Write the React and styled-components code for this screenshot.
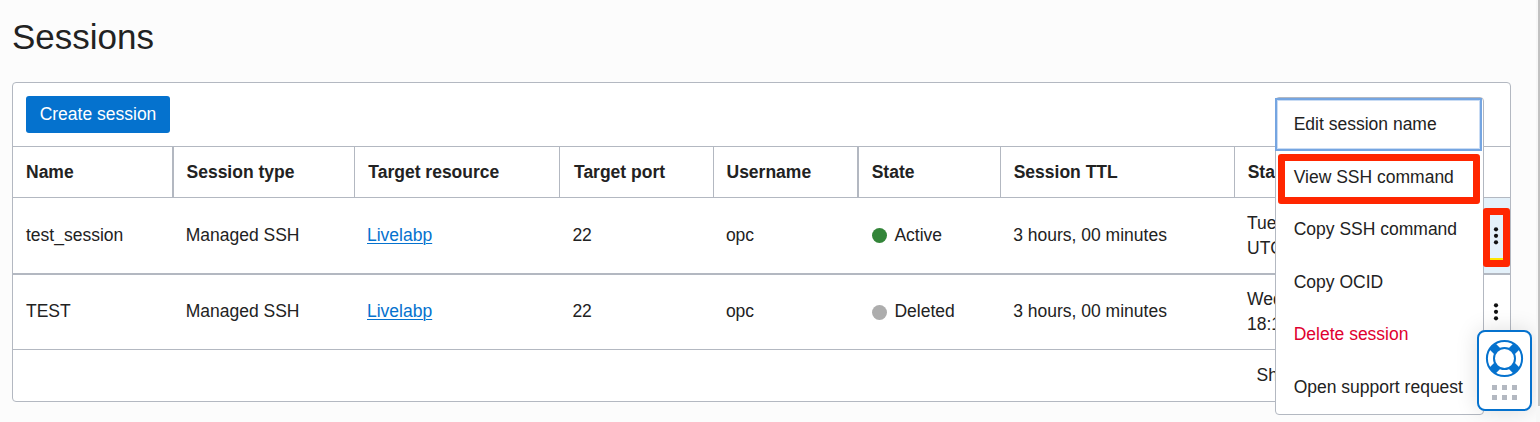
import React from "react";
import styled, { createGlobalStyle } from "styled-components";

const line = "#b3b8c1";
const blue = "#0572ce";
const red = "#ff2600";

const GlobalStyle = createGlobalStyle`
  * { box-sizing: border-box; }
  body {
    margin: 0;
    overflow: hidden;
    background: #fcfcfc;
    color: #222;
    font: 17.5px/25px "Liberation Sans", Arial, sans-serif;
  }
`;

const Page = styled.main`
  position: relative;
  height: 422px;
  padding: 16px 29px 0 12px;
`;

const Title = styled.h1`
  margin: 0 0 24px;
  font-size: 35px;
  font-weight: 400;
  line-height: 42px;
`;

const Panel = styled.section`
  height: 320px;
  border: 1px solid ${line};
  border-radius: 4px;
  background: #fff;
`;

const Toolbar = styled.div`
  height: 64px;
  padding: 13px;
  border-bottom: 1px solid ${line};
`;

const PrimaryButton = styled.button`
  display: block;
  width: 144px;
  height: 37px;
  padding: 0 0 1px;
  border: 0;
  border-radius: 3px;
  background: ${blue};
  color: #fff;
  font: inherit;
  white-space: nowrap;
`;

const Row = styled.div`
  display: grid;
  grid-template-columns: 161px 181px 205px 154px 145px 142px 234px 249px 26px;
  height: ${(p) => p.$height}px;
  border-bottom: ${(p) => p.$rule}px solid ${line};
`;

const HeadCell = styled.div`
  display: flex;
  align-items: center;
  padding-left: ${(p) => p.$inset}px;
  border-right: ${(p) => p.$rule}px solid ${line};
  font-weight: 700;
  white-space: nowrap;
`;

const Cell = styled.div`
  display: flex;
  align-items: center;
  padding-left: ${(p) => p.$inset}px;
  padding-bottom: 1px;
  white-space: nowrap;
`;

const DateCell = styled(Cell)`
  padding-bottom: 0;
`;

const Link = styled.a`
  color: ${blue};
  text-decoration: underline;
  text-decoration-thickness: 1px;
  text-underline-offset: 2px;
`;

const Dot = styled.span`
  width: 15px;
  height: 15px;
  margin: 1px 7.4px 0 0;
  border-radius: 50%;
  background: ${(p) => p.$color};
`;

const ActionButton = styled.button`
  display: flex;
  align-items: center;
  justify-content: center;
  width: 26px;
  padding: 0 2px 0 0;
  border: 0;
  background: ${(p) => (p.$active ? "#e4f1fa" : "#fff")};
`;

const Footer = styled.div`
  display: flex;
  align-items: center;
  height: 51px;
  padding-left: 1243.5px;
  white-space: nowrap;
`;

const Menu = styled.div`
  position: absolute;
  left: 1275px;
  top: 97px;
  width: 209px;
  height: 318px;
  border: 1px solid ${line};
  border-radius: 4px;
  background: #fff;
`;

const MenuItem = styled.div`
  display: flex;
  align-items: center;
  height: 52.5px;
  padding: 0.8px 0 0 17.7px;
  color: ${(p) => (p.$danger ? "#e0002f" : "inherit")};
  white-space: nowrap;
`;

const FocusRing = styled.div`
  position: absolute;
  left: -1px;
  top: 0;
  width: 207px;
  height: 53px;
  border: 2px solid #75a5e1;
  box-shadow: inset 0 0 0 1px #c9dcf4;
`;

const Marker = styled.div`
  position: absolute;
  left: ${(p) => p.$x}px;
  top: ${(p) => p.$y}px;
  width: ${(p) => p.$w}px;
  height: ${(p) => p.$h}px;
  border: 7px solid ${red};
  border-radius: 3px;
  box-shadow: ${(p) => (p.$accent ? "inset 0 -2px #ffe600" : "none")};
`;

const Support = styled.div`
  position: absolute;
  left: 1477px;
  top: 330px;
  display: flex;
  flex-direction: column;
  align-items: center;
  width: 55px;
  height: 81px;
  padding-top: 7px;
  border: 2px solid ${blue};
  border-radius: 8px;
  background: #fff;
  box-shadow: 0 0 22px rgba(0, 0, 0, 0.13);
`;

const Grip = styled.div`
  display: grid;
  grid-template-columns: repeat(3, 5px);
  grid-auto-rows: 5px;
  gap: 5px;
  margin-top: 7px;
`;

const GripDot = styled.i`
  background: ${line};
`;

const ScrollTrack = styled.div`
  position: absolute;
  right: 0;
  top: 0;
  width: 4px;
  height: 422px;
  background: #f7f7f7;
`;

const ScrollThumb = styled.div`
  width: 2px;
  height: 406px;
  margin-left: 2px;
  background: #c1c1c1;
`;

const columns = [
  { label: "Name", head: 13, rule: 2 },
  { label: "Session type", head: 12.5, rule: 1 },
  { label: "Target resource", head: 13.3, rule: 1 },
  { label: "Target port", head: 14, rule: 1 },
  { label: "Username", head: 12.5, rule: 2 },
  { label: "State", head: 12.7, rule: 1 },
  { label: "Session TTL", head: 12.7, rule: 1 },
  { label: "Started", head: 12.7, rule: 0 },
];

const sessions = [
  { name: "test_session", state: "Active", color: "#338539", date: "Tue,", time: "UTC", active: true },
  { name: "TEST", state: "Deleted", color: "#adadad", date: "Wed,", time: "18:14", active: false },
];

function Kebab() {
  return (
    <svg width="6" height="20" viewBox="0 0 6 20" fill="#111">
      <circle cx="3" cy="3.3" r="2.1" />
      <circle cx="3" cy="9.8" r="2.1" />
      <circle cx="3" cy="16.3" r="2.1" />
    </svg>
  );
}

function Lifebuoy() {
  return (
    <svg width="39" height="39" viewBox="0 0 39 39" fill="none" stroke={blue}>
      <path
        d="M7.3 7.3l5 5M31.7 7.3l-5 5M7.3 31.7l5-5M31.7 31.7l-5-5"
        strokeWidth="8.6"
      />
      <circle cx="19.5" cy="19.5" r="17.6" strokeWidth="2" />
      <circle cx="19.5" cy="19.5" r="10.5" strokeWidth="2" fill="#fff" />
    </svg>
  );
}

export default function App() {
  return (
    <Page>
      <GlobalStyle />
      <Title>Sessions</Title>
      <Panel>
        <Toolbar>
          <PrimaryButton>Create session</PrimaryButton>
        </Toolbar>
        <Row $height={51} $rule={1}>
          {columns.map((c) => (
            <HeadCell key={c.label} $inset={c.head} $rule={c.rule}>{c.label}</HeadCell>
          ))}
        </Row>
        {sessions.map((s) => (
          <Row key={s.name} $height={s.active ? 77 : 75} $rule={s.active ? 2 : 1}>
            <Cell $inset={13}>{s.name}</Cell>
            <Cell $inset={11.7}>Managed SSH</Cell>
            <Cell $inset={12}><Link>Livelabp</Link></Cell>
            <Cell $inset={12.4}>22</Cell>
            <Cell $inset={11.9}>opc</Cell>
            <Cell $inset={13}><Dot $color={s.color} />{s.state}</Cell>
            <Cell $inset={12.2}>3 hours, 00 minutes</Cell>
            <DateCell $inset={12}>{s.date}<br />{s.time}</DateCell>
            <ActionButton $active={s.active} aria-label="Actions"><Kebab /></ActionButton>
          </Row>
        ))}
        <Footer>Showing 2 items</Footer>
      </Panel>
      <Menu>
        <MenuItem>Edit session name</MenuItem>
        <MenuItem>View SSH command</MenuItem>
        <MenuItem>Copy SSH command</MenuItem>
        <MenuItem>Copy OCID</MenuItem>
        <MenuItem $danger>Delete session</MenuItem>
        <MenuItem>Open support request</MenuItem>
        <FocusRing />
      </Menu>
      <Marker $x={1278} $y={154} $w={202} $h={50} />
      <Marker $x={1483} $y={208} $w={27} $h={59} $accent />
      <Support>
        <Lifebuoy />
        <Grip>
          {[0, 1, 2, 3, 4, 5].map((n) => <GripDot key={n} />)}
        </Grip>
      </Support>
      <ScrollTrack><ScrollThumb /></ScrollTrack>
    </Page>
  );
}
